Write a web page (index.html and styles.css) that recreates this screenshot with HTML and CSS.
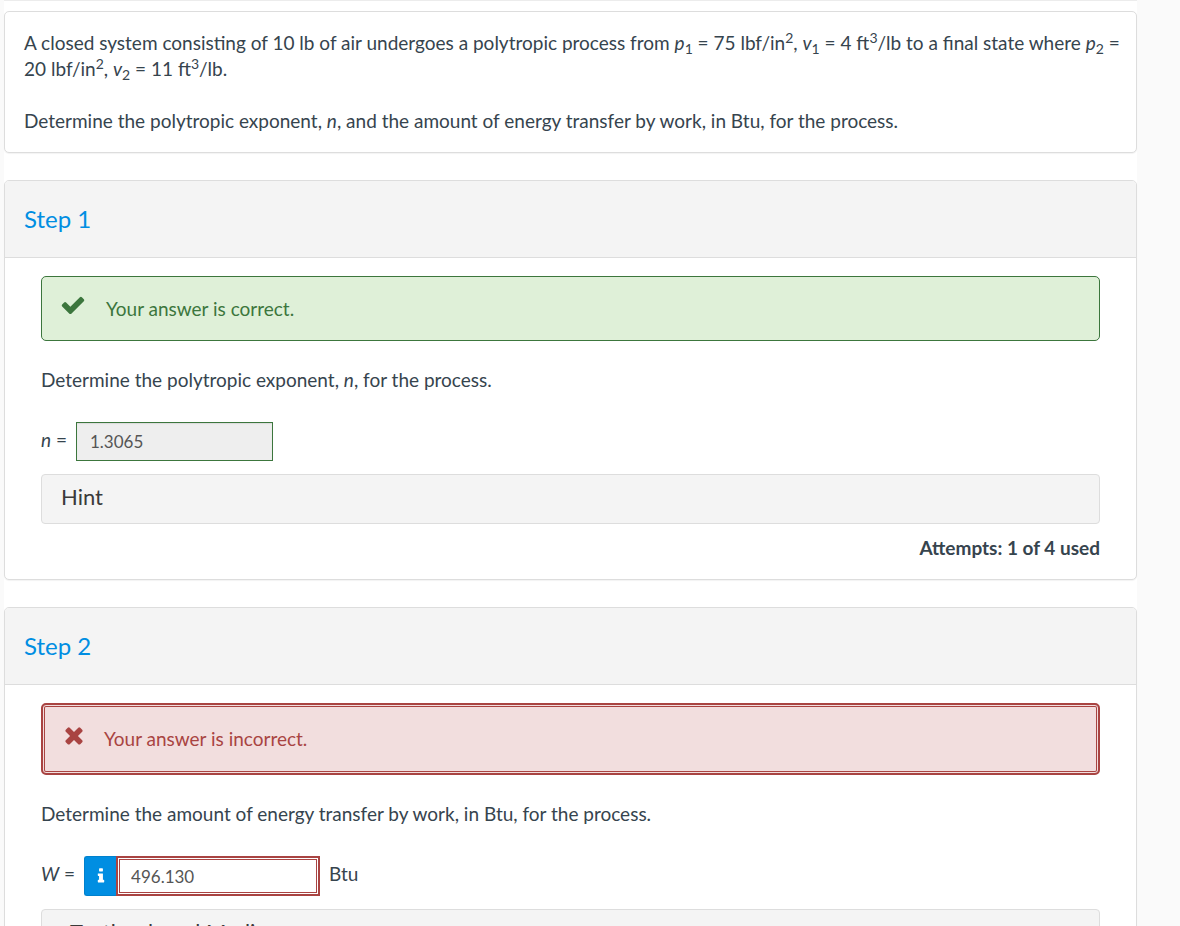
FILE: index.html
```html
<!DOCTYPE html>
<html lang="en">
<head>
    <meta charset="UTF-8">
    <meta name="viewport" content="width=device-width, initial-scale=1.0">
    <title>Polytropic Process</title>
    <link rel="stylesheet" href="styles.css">
</head>
<body>
    <main class="question">
        <section class="card problem">
            <p>A closed system consisting of 10 lb of air undergoes a polytropic process from <em>p</em><sub>1</sub> = 75 lbf/in<sup>2</sup>, <em>v</em><sub>1</sub> = 4 ft<sup>3</sup>/lb to a final state where <em>p</em><sub>2</sub>&nbsp;= 20 lbf/in<sup>2</sup>, <em>v</em><sub>2</sub> = 11 ft<sup>3</sup>/lb.</p>
            <p>Determine the polytropic exponent, <em>n</em>, and the amount of energy transfer by work, in Btu, for the process.</p>
        </section>

        <!-- Step 1 -->
        <section class="card">
            <h2 class="step-title">Step 1</h2>
            <div class="step-body">
                <div class="alert alert-correct" role="status">
                    <svg class="alert-icon" width="26" height="26" viewBox="0 0 1792 1792" fill="currentColor" aria-hidden="true">
                        <path d="M1671 566q0 40-28 68l-724 724-136 136q-28 28-68 28t-68-28l-136-136-362-362q-28-28-28-68t28-68l136-136q28-28 68-28t68 28l294 295 656-657q28-28 68-28t68 28l136 136q28 28 28 68z"/>
                    </svg>
                    <span>Your answer is correct.</span>
                </div>
                <p class="prompt">Determine the polytropic exponent, <em>n</em>, for the process.</p>
                <div class="answer">
                    <label for="exponent"><em>n</em> =</label>
                    <input class="answer-input correct" type="text" id="exponent" value="1.3065" readonly>
                </div>
                <button class="help-button" type="button">Hint</button>
                <p class="attempts">Attempts: 1 of 4 used</p>
            </div>
        </section>

        <!-- Step 2 -->
        <section class="card">
            <h2 class="step-title">Step 2</h2>
            <div class="step-body">
                <div class="alert alert-incorrect" role="status">
                    <svg class="alert-icon" width="26" height="26" viewBox="0 0 1792 1792" fill="currentColor" aria-hidden="true">
                        <path d="M1490 1322q0 40-28 68l-136 136q-28 28-68 28t-68-28l-294-294-294 294q-28 28-68 28t-68-28l-136-136q-28-28-28-68t28-68l294-294-294-294q-28-28-28-68t28-68l136-136q28-28 68-28t68 28l294 294 294-294q28-28 68-28t68 28l136 136q28 28 28 68t-28 68l-294 294 294 294q28 28 28 68z"/>
                    </svg>
                    <span>Your answer is incorrect.</span>
                </div>
                <p class="prompt">Determine the amount of energy transfer by work, in Btu, for the process.</p>
                <div class="answer">
                    <label for="work"><em>W</em> =</label>
                    <div class="input-group">
                        <button class="info-button" type="button" aria-label="Information">
                            <svg width="18" height="18" viewBox="0 0 1792 1792" fill="currentColor" aria-hidden="true">
                                <path d="M1216 1344v128q0 26-19 45t-45 19h-512q-26 0-45-19t-19-45v-128q0-26 19-45t45-19h64v-384h-64q-26 0-45-19t-19-45v-128q0-26 19-45t45-19h384q26 0 45 19t19 45v576h64q26 0 45 19t19 45zm-128-1152v192q0 26-19 45t-45 19h-256q-26 0-45-19t-19-45v-192q0-26 19-45t45-19h256q26 0 45 19t19 45z"/>
                            </svg>
                        </button>
                        <input class="answer-input incorrect" type="text" id="work" value="496.130">
                    </div>
                    <span class="unit">Btu</span>
                </div>
                <button class="help-button" type="button">eTextbook and Media</button>
            </div>
        </section>
    </main>
</body>
</html>
```

FILE: styles.css
```css
* {
    box-sizing: border-box;
}
body {
    margin: 0;
    background-color: #fafafa;
    color: #36444e;
    font-family: Lato, sans-serif;
    font-size: 19px;
    line-height: 26px;
}
p {
    margin: 0;
}
/* White column with a thin gray strip on both sides */
.question {
    display: flex;
    flex-direction: column;
    gap: 27px;
    margin: 0 43px 0 4px;
    padding: 10px 0 27px;
    background-color: #fff;
    border-top: 1px solid #ececec;
}
.card {
    background-color: #fff;
    border: 1px solid #ddd;
    border-radius: 5px;
    box-shadow: 0 1px 1px rgba(0, 0, 0, 0.05);
}
.problem {
    display: grid;
    gap: 26px;
    padding: 18px 12px 18px 19px;
}
sub, sup {
    font-size: 14px;
    line-height: 0;
    position: relative;
    vertical-align: baseline;
}
sup {
    top: -7px;
}
sub {
    bottom: -4px;
}
.step-title {
    margin: 0;
    padding: 23px 19px;
    background-color: #f4f4f4;
    border-bottom: 1px solid #ddd;
    border-radius: 4px 4px 0 0;
    color: #008ee2;
    font-size: 24px;
    font-weight: 400;
    line-height: 30px;
}
.step-body {
    padding: 18px 36px;
}
.alert {
    display: flex;
    align-items: flex-start;
    gap: 20px;
    margin-bottom: 26px;
    border-radius: 5px;
}
.alert-correct {
    padding: 19px 18px 18px;
    background-color: #dff0d8;
    border: 1px solid #3c763d;
    color: #3c763d;
}
.alert-incorrect {
    gap: 17px;
    padding: 21px 18px;
    background-color: #f2dede;
    border: 2px solid #a94442;
    box-shadow: inset 0 0 0 1px #f2dede, inset 0 0 0 2px #a94442;
    color: #a94442;
}
.alert-icon {
    flex: none;
    margin-top: -4px;
}
.prompt {
    margin-bottom: 29px;
}
.answer {
    display: flex;
    align-items: center;
    gap: 9px;
    margin-bottom: 13px;
}
.answer label, .unit {
    padding-bottom: 4px;
}
.answer-input {
    width: 197px;
    height: 39px;
    padding: 0 13px;
    background-color: #fff;
    color: #555;
    font-family: inherit;
    font-size: 17px;
}
.answer-input.correct {
    background-color: #eee;
    border: 1px solid #3c763d;
    box-shadow: inset 0 1px 1px rgba(0, 0, 0, 0.08);
}
.answer-input.incorrect {
    width: 204px;
    height: 40px;
    border: 2px solid #a94442;
    box-shadow: inset 0 0 0 1px #fff, inset 0 0 0 2px #a94442;
}
.input-group {
    display: flex;
}
.info-button {
    display: flex;
    align-items: center;
    justify-content: center;
    width: 32px;
    padding: 0;
    background-color: #008ee2;
    border: 1px solid #0081cd;
    border-right: none;
    border-radius: 3px 0 0 3px;
    color: #fff;
    cursor: pointer;
}
.help-button {
    display: block;
    width: 100%;
    padding: 7px 19px 11px;
    background-color: #f4f4f4;
    border: 1px solid #ddd;
    border-radius: 4px;
    color: #3a3a3a;
    font-family: inherit;
    font-size: 22px;
    line-height: 30px;
    text-align: left;
    cursor: pointer;
}
.attempts {
    margin-top: 11px;
    font-weight: 700;
    text-align: right;
}
```
